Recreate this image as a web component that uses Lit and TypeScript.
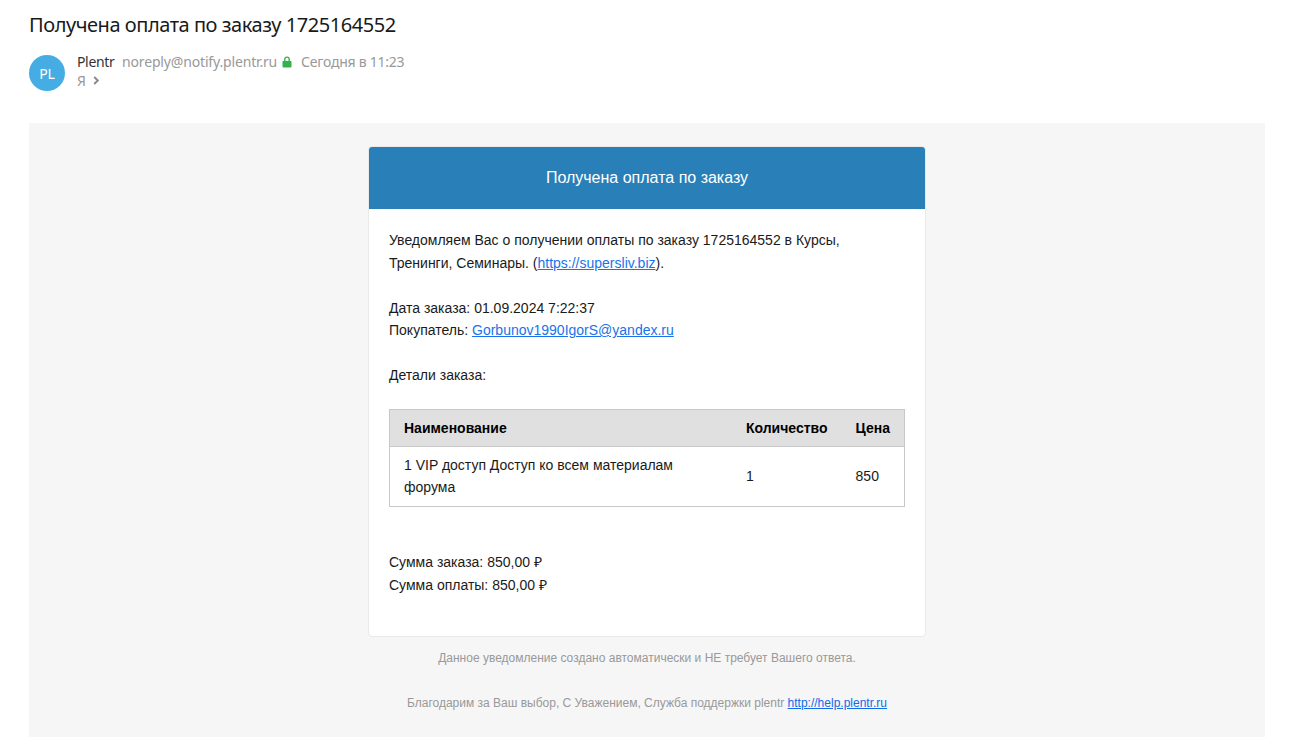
import { LitElement, css, html } from "lit";
import { customElement, property } from "lit/decorators.js";

interface OrderItem {
  name: string;
  count: number;
  price: number;
}

@customElement("mail-header")
export class MailHeader extends LitElement {
  @property() subject = "";
  @property() sender = "";
  @property() email = "";
  @property() date = "";

  static styles = css`
    :host {
      display: block;
      font-family: "Noto Sans", "Open Sans", sans-serif;
    }
    .subject {
      margin: 0;
      font-size: 20px;
      line-height: 26px;
      font-weight: 400;
      letter-spacing: -0.45px;
      color: #1a1a1a;
      white-space: nowrap;
    }
    .info {
      display: flex;
      gap: 12px;
      margin-top: 17px;
    }
    .avatar {
      display: flex;
      align-items: center;
      justify-content: center;
      width: 36px;
      height: 36px;
      border-radius: 50%;
      background: #45ade4;
      color: #fff;
      font-size: 14px;
      letter-spacing: -0.2px;
    }
    .lines {
      font-size: 14px;
      line-height: 19px;
      color: #999;
      margin-top: -3px;
      white-space: nowrap;
    }
    .line {
      display: flex;
      align-items: center;
    }
    .sender {
      color: #333;
      width: 45px;
      letter-spacing: -0.35px;
    }
    .email {
      width: 160px;
      letter-spacing: -0.16px;
    }
    .lock {
      width: 10px;
      height: 12px;
      margin-right: 9px;
    }
    .date {
      letter-spacing: -0.24px;
    }
    .arrow {
      width: 7px;
      height: 9px;
      margin-left: 7px;
    }
  `;

  render() {
    return html`
      <h1 class="subject">${this.subject}</h1>
      <div class="info">
        <div class="avatar">PL</div>
        <div class="lines">
          <div class="line">
            <span class="sender">${this.sender}</span>
            <span class="email">${this.email}</span>
            <svg class="lock" viewBox="0 0 10 12">
              <path d="M2.8 6V3.3a2.2 2.2 0 0 1 4.4 0V6" fill="none" stroke="#33b14a" stroke-width="1.4" />
              <rect x="0.5" y="5" width="9" height="6.4" rx="0.8" fill="#33b14a" />
            </svg>
            <span class="date">${this.date}</span>
          </div>
          <div class="line">
            <span>Я</span>
            <svg class="arrow" viewBox="0 0 7 9">
              <path d="M1.2 1L4.8 4.5L1.2 8" fill="none" stroke="#8c8c8c" stroke-width="2" />
            </svg>
          </div>
        </div>
      </div>
    `;
  }
}

@customElement("order-table")
export class OrderTable extends LitElement {
  @property({ type: Array }) items: OrderItem[] = [];

  static styles = css`
    :host {
      display: block;
    }
    table {
      width: 100%;
      border: 1px solid #c8c8c8;
      border-spacing: 0;
      font-size: 14px;
      line-height: 22.4px;
    }
    th,
    td {
      padding: 7px 14px;
      text-align: left;
      vertical-align: middle;
    }
    th {
      background: #e0e0e0;
      border-bottom: 1px solid #c8c8c8;
      color: #000;
    }
    .name {
      width: 100%;
    }
  `;

  render() {
    return html`
      <table>
        <thead>
          <tr>
            <th class="name">Наименование</th>
            <th>Количество</th>
            <th>Цена</th>
          </tr>
        </thead>
        <tbody>
          ${this.items.map(
            (item) => html`
              <tr>
                <td>${item.name}</td>
                <td>${item.count}</td>
                <td>${item.price}</td>
              </tr>
            `
          )}
        </tbody>
      </table>
    `;
  }
}

@customElement("app-root")
export class AppRoot extends LitElement {
  items: OrderItem[] = [
    { name: "1 VIP доступ Доступ ко всем материалам форума", count: 1, price: 850 },
  ];

  static styles = css`
    :host {
      display: block;
      box-sizing: border-box;
      height: 756px;
      padding: 12px 30px 19px 29px;
      background: #fff;
      overflow: hidden;
    }
    .letter {
      box-sizing: border-box;
      height: 614px;
      margin-top: 32px;
      padding-top: 23px;
      background: #f6f6f6;
      font-family: "Liberation Sans", Arial, sans-serif;
      font-size: 14px;
      line-height: 22.4px;
      color: #1a1a1a;
    }
    .card {
      box-sizing: border-box;
      width: 558px;
      height: 491px;
      margin: 0 auto;
      border: 1px solid #e9e9e9;
      border-radius: 4px;
      background: #fff;
      overflow: hidden;
    }
    .title {
      padding: 20px;
      background: #2980b9;
      color: #fff;
      font-size: 16px;
      text-align: center;
    }
    .content {
      padding: 20px;
    }
    p {
      margin: 0 0 22.4px;
    }
    .total {
      margin-top: 44.4px;
    }
    a {
      color: #1a73e8;
      text-decoration: underline;
    }
    .footer {
      padding-top: 10px;
      text-align: center;
      font-size: 12px;
      color: #999;
    }
    .footer a {
      color: #0f6be8;
    }
  `;

  render() {
    return html`
      <mail-header
        subject="Получена оплата по заказу 1725164552"
        sender="Plentr"
        email="noreply@notify.plentr.ru"
        date="Сегодня в 11:23"
      ></mail-header>
      <div class="letter">
        <div class="card">
          <div class="title">Получена оплата по заказу</div>
          <div class="content">
            <p>
              Уведомляем Вас о получении оплаты по заказу 1725164552 в Курсы,<br />
              Тренинги, Семинары. (<a href="#">https://supersliv.biz</a>).
            </p>
            <p>
              Дата заказа: 01.09.2024 7:22:37<br />
              Покупатель: <a href="#">Gorbunov1990IgorS@yandex.ru</a>
            </p>
            <p>Детали заказа:</p>
            <order-table .items=${this.items}></order-table>
            <p class="total">
              Сумма заказа: 850,00 ₽<br />
              Сумма оплаты: 850,00 ₽
            </p>
          </div>
        </div>
        <div class="footer">
          <p>Данное уведомление создано автоматически и НЕ требует Вашего ответа.</p>
          <p>
            Благодарим за Ваш выбор, С Уважением, Служба поддержки plentr
            <a href="#">http://help.plentr.ru</a>
          </p>
        </div>
      </div>
    `;
  }
}

declare global {
  interface HTMLElementTagNameMap {
    "mail-header": MailHeader;
    "order-table": OrderTable;
    "app-root": AppRoot;
  }
}
